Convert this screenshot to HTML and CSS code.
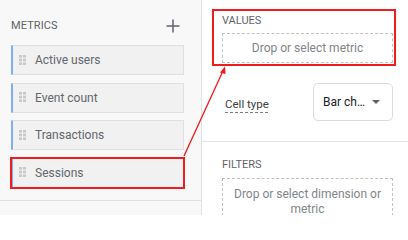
FILE: index.html
```html
<!DOCTYPE html>
<html>
<head>
<meta charset="utf-8">
<link rel="stylesheet" href="styles.css">
</head>
<body>
<div class="app">
  <aside class="left">
    <div class="head">
      <span class="title">METRICS</span>
      <svg class="plus" width="14" height="14" viewBox="0 0 14 14"><path d="M7 0.5v13M0.5 7h13" stroke="#5f6368" stroke-width="1.5" fill="none"/></svg>
    </div>
    <div class="chips">
      <div class="chip"><svg class="grip" width="7" height="10" viewBox="0 0 7 10"><g fill="#c8c8c8"><rect x="0" y="0" width="3" height="2.6"/><rect x="4" y="0" width="3" height="2.6"/><rect x="0" y="3.7" width="3" height="2.6"/><rect x="4" y="3.7" width="3" height="2.6"/><rect x="0" y="7.4" width="3" height="2.6"/><rect x="4" y="7.4" width="3" height="2.6"/></g></svg><span>Active users</span></div>
      <div class="chip"><svg class="grip" width="7" height="10" viewBox="0 0 7 10"><g fill="#c8c8c8"><rect x="0" y="0" width="3" height="2.6"/><rect x="4" y="0" width="3" height="2.6"/><rect x="0" y="3.7" width="3" height="2.6"/><rect x="4" y="3.7" width="3" height="2.6"/><rect x="0" y="7.4" width="3" height="2.6"/><rect x="4" y="7.4" width="3" height="2.6"/></g></svg><span>Event count</span></div>
      <div class="chip"><svg class="grip" width="7" height="10" viewBox="0 0 7 10"><g fill="#c8c8c8"><rect x="0" y="0" width="3" height="2.6"/><rect x="4" y="0" width="3" height="2.6"/><rect x="0" y="3.7" width="3" height="2.6"/><rect x="4" y="3.7" width="3" height="2.6"/><rect x="0" y="7.4" width="3" height="2.6"/><rect x="4" y="7.4" width="3" height="2.6"/></g></svg><span>Transactions</span></div>
      <div class="chip hl"><svg class="grip" width="7" height="10" viewBox="0 0 7 10"><g fill="#c8c8c8"><rect x="0" y="0" width="3" height="2.6"/><rect x="4" y="0" width="3" height="2.6"/><rect x="0" y="3.7" width="3" height="2.6"/><rect x="4" y="3.7" width="3" height="2.6"/><rect x="0" y="7.4" width="3" height="2.6"/><rect x="4" y="7.4" width="3" height="2.6"/></g></svg><span>Sessions</span></div>
    </div>
    <div class="foot"></div>
  </aside>
  <main class="right">
    <section class="values">
      <div class="label">VALUES</div>
      <div class="drop">Drop or select metric</div>
    </section>
    <div class="cellrow">
      <span class="celllabel">Cell type</span>
      <div class="select"><span>Bar ch…</span><span class="caret"></span></div>
    </div>
    <section class="filters">
      <div class="label">FILTERS</div>
      <div class="drop multi">Drop or select dimension or metric</div>
    </section>
  </main>
  <svg class="arrow" width="408" height="215" viewBox="0 0 408 215">
    <line x1="184" y1="156" x2="222.5" y2="72" stroke="#f01818" stroke-width="1.3"/>
    <polygon points="225,66.5 220,72.5 225.5,74" fill="#f01818"/>
  </svg>
</div>
</body>
</html>
```

FILE: styles.css
```css
* { box-sizing: border-box; }
html, body { margin: 0; padding: 0; }
body {
  width: 408px;
  height: 215px;
  overflow: hidden;
  background: #fff;
  font-family: Roboto, "Liberation Sans", sans-serif;
}
.app {
  position: relative;
  display: flex;
  width: 408px;
  height: 215px;
}
.left {
  width: 202px;
  background: #f8f8f8;
  border-right: 1px solid #e3e3e3;
  display: flex;
  flex-direction: column;
}
.head {
  display: flex;
  align-items: center;
  justify-content: space-between;
  height: 14px;
  margin: 19px 21px 0 11px;
}
.title {
  font-size: 11px;
  line-height: 14px;
  color: #5f6368;
  letter-spacing: 0.1px;
}
.plus { display: block; margin-top: -1px; }
.chips {
  display: flex;
  flex-direction: column;
  gap: 7.5px;
  margin: 12px 17px 0 11px;
}
.chip {
  display: flex;
  align-items: center;
  height: 30px;
  background: #f1f1f1;
  border: 1px solid #dfdfdf;
  border-left: 2px solid #7fadf6;
  padding-left: 6px;
  font-size: 12px;
  color: #63676c;
}
.chip .grip { flex: none; margin-right: 9px; margin-top: -1px; }
.chip.hl {
  outline: 2px solid #ee1c1c;
  outline-offset: -1px;
}
.foot {
  margin-top: 12px;
  border-top: 1px solid #e0e0e0;
  flex: 1;
}
.right {
  flex: 1;
  display: flex;
  flex-direction: column;
}
.label {
  font-size: 11px;
  line-height: 14px;
  color: #5f6368;
}
.values {
  margin: 9px 12px 0 10px;
  border: 2px solid #ee1c1c;
  padding: 3px 1px 1px 8px;
}
.values .label { margin-bottom: 5px; }
.drop {
  border: 1px dashed #c0c0c0;
  height: 30px;
  display: flex;
  align-items: center;
  justify-content: center;
  font-size: 12px;
  color: #80868b;
  text-align: center;
}
.cellrow {
  display: flex;
  align-items: center;
  justify-content: space-between;
  padding: 17px 15px 20px 23px;
  border-bottom: 1px solid #e3e3e3;
}
.celllabel {
  font-size: 11.5px;
  color: #3c4043;
  text-decoration: underline dashed #7a7f85;
  text-underline-offset: 4px;
  text-decoration-thickness: 1px;
  margin-top: 3px;
}
.select {
  width: 80px;
  height: 38px;
  border: 1px solid #dadce0;
  border-radius: 5px;
  display: flex;
  align-items: center;
  padding-left: 9px;
  font-size: 12px;
  color: #202124;
}
.caret {
  margin-left: 7px;
  width: 0;
  height: 0;
  border-left: 4px solid transparent;
  border-right: 4px solid transparent;
  border-top: 4px solid #5f6368;
}
.filters {
  padding: 16px 15px 0 20px;
}
.filters .label { margin-bottom: 6px; }
.drop.multi {
  height: auto;
  display: block;
  padding: 8px 8px;
  line-height: 15px;
}
.arrow {
  position: absolute;
  left: 0;
  top: 0;
  pointer-events: none;
}
```
